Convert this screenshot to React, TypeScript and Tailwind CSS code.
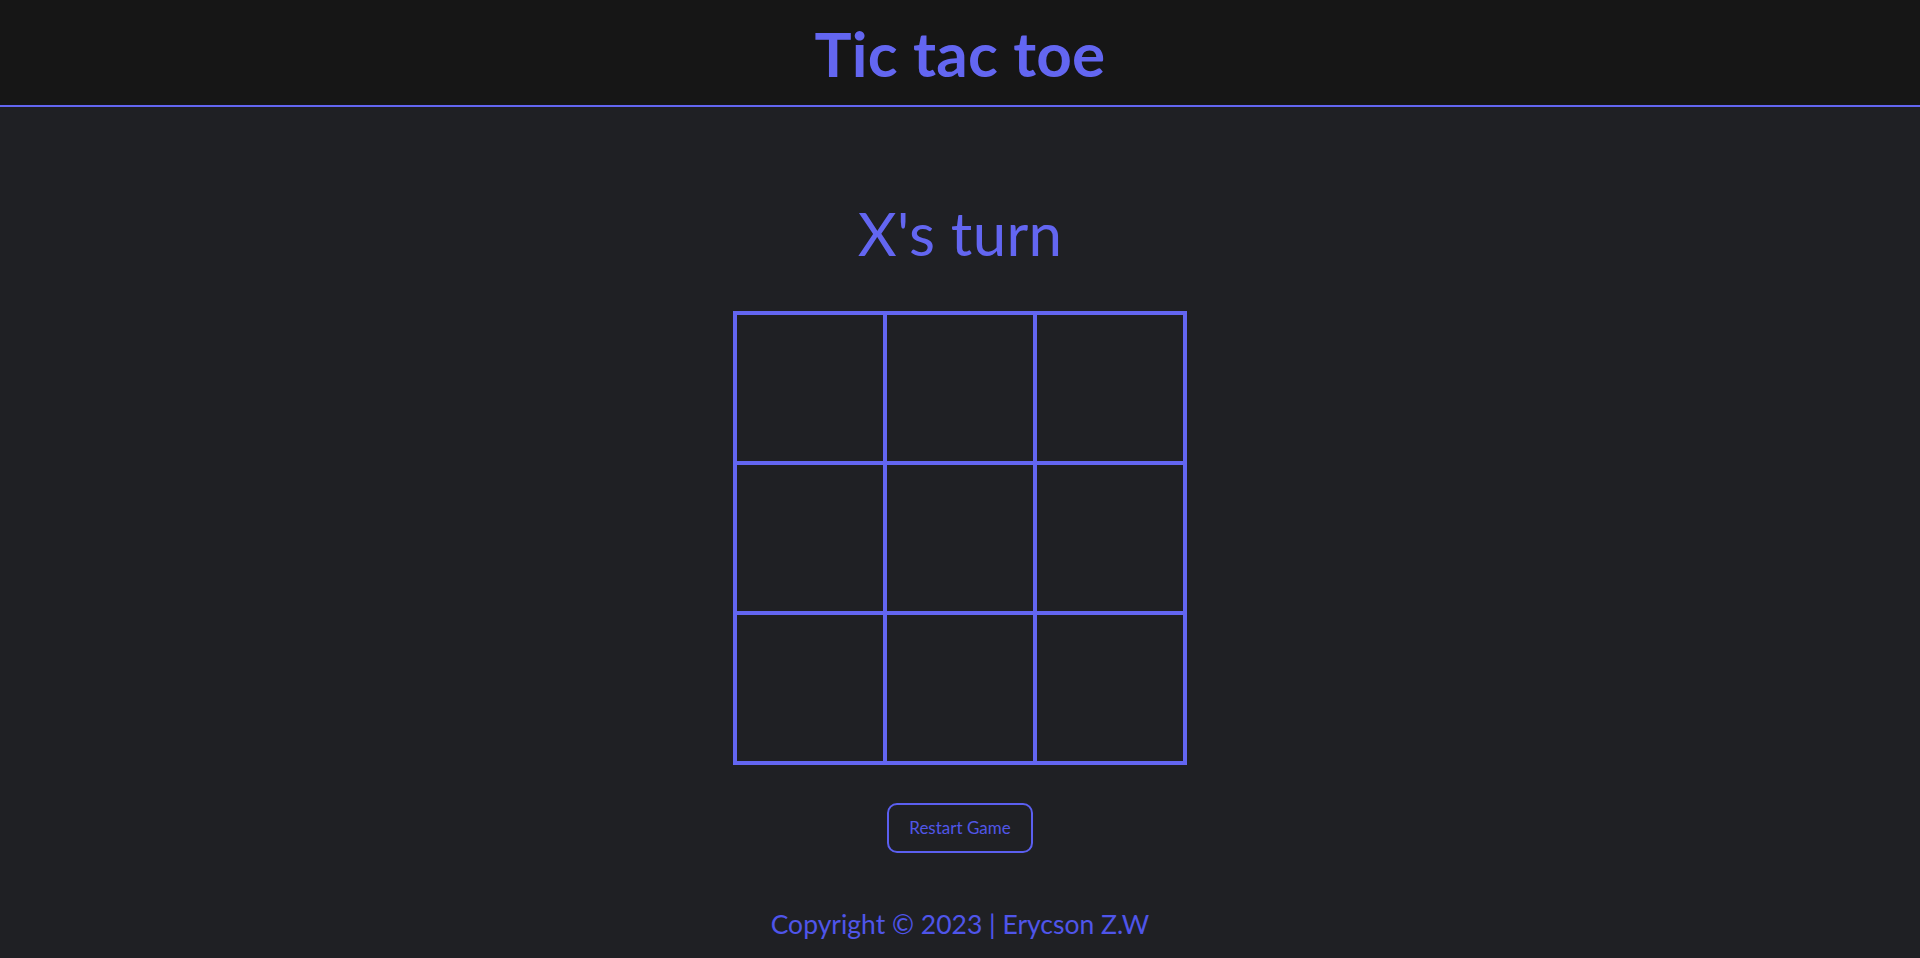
import React from "react";

export default function App() {
  const cells = Array.from({ length: 9 });
  return (
    <div className="min-h-[958px] bg-[#1f2024] flex flex-col" style={{ fontFamily: "Lato, 'Noto Sans', sans-serif" }}>
      <header className="h-[107px] bg-[#161616] border-b-2 border-[#6366f1] flex items-center justify-center">
        <h1 className="text-[62px] leading-none font-bold text-[#6366f1] tracking-[0.2px]">Tic tac toe</h1>
      </header>
      <main className="flex flex-col items-center">
        <h2 className="mt-[96px] text-[60px] leading-none text-[#6366f1] tracking-[0.3px]">X's turn</h2>
        <div className="mt-[48px] grid grid-cols-3 border-2 border-[#6366f1]">
          {cells.map((_, i) => (
            <div key={i} className="w-[150px] h-[150px] border-2 border-[#6366f1]" />
          ))}
        </div>
        <button className="mt-[38px] w-[146px] h-[50px] rounded-[10px] border-2 border-[#5b5ff0] text-[17px] text-[#5156e8]">
          Restart Game
        </button>
        <footer className="mt-[55px] text-[26.5px] leading-tight text-[#4f55ea]">Copyright © 2023 | Erycson Z.W</footer>
      </main>
    </div>
  );
}
